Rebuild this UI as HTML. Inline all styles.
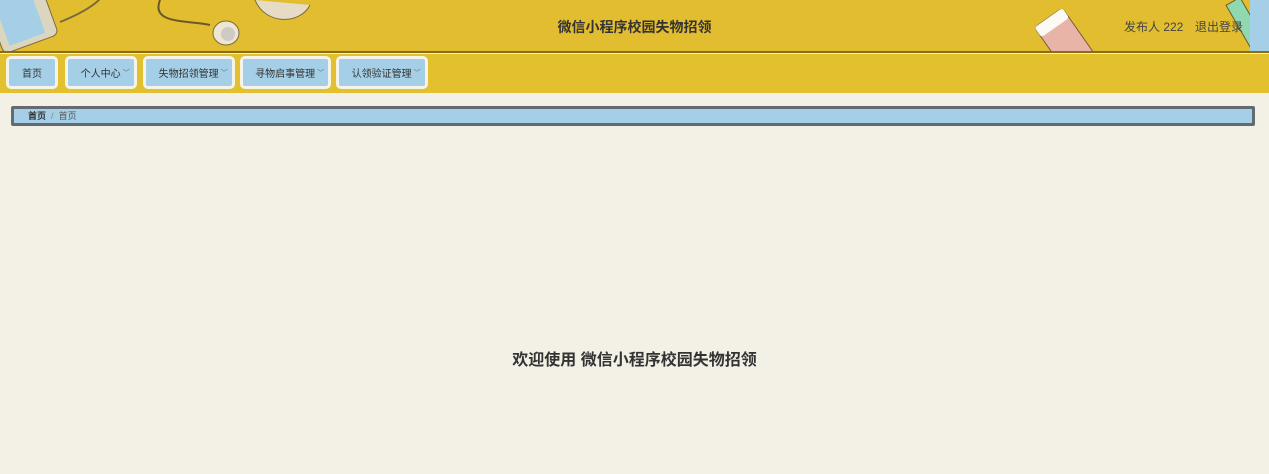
<!DOCTYPE html>
<html><head><meta charset="utf-8"><style>
*{margin:0;padding:0;box-sizing:border-box}
body{width:1269px;height:474px;background:#f3f0e6;font-family:"Liberation Sans","Noto Sans CJK SC",sans-serif;position:relative;overflow:hidden}
.hdr{position:absolute;left:0;top:0;width:1269px;height:53px;background:#e2bd2f;border-bottom:2px solid #8a6d12;overflow:hidden}
.nav{position:absolute;left:0;top:54px;width:1269px;height:39px;background:#e3c12e}
.title{position:absolute;left:0;width:1269px;top:17px;text-align:center;font-size:14px;font-weight:bold;color:#333}
.user{position:absolute;top:18px;font-size:12px;color:#444}
.btn{position:absolute;top:56px;height:33px;border:3px solid #f6f3ea;border-radius:5px;background:#a4cfe6;font-size:10px;color:#333;display:flex;align-items:center;justify-content:center}
.btn i{font-style:normal;font-size:7px;color:#666;margin-left:2px}
.bc{position:absolute;left:11px;top:106px;width:1244px;height:20px;background:#a4cfe6;border:3px solid #636a72;border-radius:2px;font-size:9px;color:#333;padding-left:14px;line-height:14px}
.welcome{position:absolute;left:0;width:1269px;top:346px;text-align:center;font-size:16px;font-weight:bold;color:#333}
</style></head><body>
<div class="hdr">
<svg width="1269" height="53" style="position:absolute;left:0;top:0">
<rect x="-10" y="-20" width="58" height="66" rx="6" fill="#dcd6c0" stroke="#7a6a3a" transform="rotate(-20 20 10)"/>
<rect x="-2" y="-10" width="38" height="50" fill="#a4cfe6" transform="rotate(-20 20 10)"/>
<path d="M60 22 C90 10 110 -5 100 -10" stroke="#7a6a3a" stroke-width="2" fill="none"/>
<path d="M160 0 C150 25 190 20 210 25" stroke="#6a5a2a" stroke-width="2" fill="none"/>
<ellipse cx="226" cy="33" rx="13" ry="12" fill="#ede6d2" stroke="#7a6a3a"/>
<circle cx="228" cy="34" r="7" fill="#cfcac4"/>
<path d="M255 0 C265 25 300 25 310 5" fill="#e6dcc6" stroke="#7a6a3a"/>
<rect x="1040" y="15" width="34" height="60" rx="4" fill="#e8b4a8" stroke="#7a5a3a" transform="rotate(-35 1057 30)"/>
<rect x="1040" y="15" width="34" height="12" rx="3" fill="#fbfaf4" transform="rotate(-35 1057 30)"/>
<rect x="1230" y="0" width="16" height="70" fill="#8fd8b0" stroke="#6a5a2a" transform="rotate(-30 1238 10)"/>
<rect x="1250" y="0" width="30" height="53" fill="#a4cfe6"/>
</svg>
<div class="title">微信小程序校园失物招领</div>
<div class="user" style="left:1124px">发布人 222</div>
<div class="user" style="left:1195px">退出登录</div>
</div>
<div class="nav"></div>
<div class="btn" style="left:6px;width:52px">首页</div>
<div class="btn" style="left:65px;width:72px">&nbsp;&nbsp;&nbsp;个人中心<i>﹀</i></div>
<div class="btn" style="left:143px;width:92px">&nbsp;&nbsp;&nbsp;失物招领管理<i>﹀</i></div>
<div class="btn" style="left:240px;width:91px">&nbsp;&nbsp;&nbsp;寻物启事管理<i>﹀</i></div>
<div class="btn" style="left:336px;width:92px">&nbsp;&nbsp;&nbsp;认领验证管理<i>﹀</i></div>
<div class="bc"><b>首页</b> <span style="color:#888">&nbsp;/&nbsp;</span> <span style="color:#555">首页</span></div>
<div class="welcome">欢迎使用 微信小程序校园失物招领</div>
</body></html>
